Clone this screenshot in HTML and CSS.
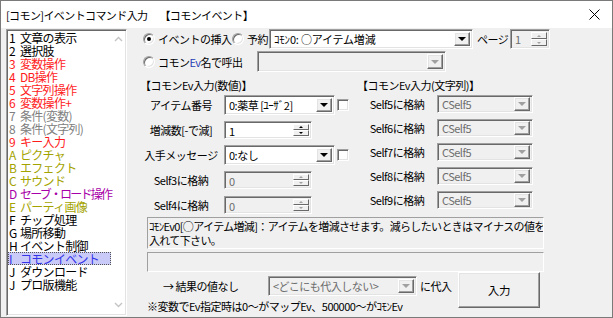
FILE: index.html
```html
<!DOCTYPE html>
<html lang="ja">
<head>
  <meta charset="UTF-8">
  <title>[コモン]イベントコマンド入力</title>
  <link rel="stylesheet" href="styles.css">
</head>
<body>
  <div class="window">
    <div class="titlebar">
      <span class="title-main">[コモン]イベントコマンド入力</span>
      <span class="title-sub">【コモンイベント】</span>
      <svg class="close" width="11" height="11" viewBox="0 0 11 11">
        <path d="M0.5 0.5 L10.5 10.5 M10.5 0.5 L0.5 10.5" stroke="#000" stroke-width="1" fill="none"/>
      </svg>
    </div>

    <div class="main">
      <div class="cmdlist">
        <ul class="items">
          <li class="black"><span class="key">1</span>文章の表示</li>
          <li class="black"><span class="key">2</span>選択肢</li>
          <li class="red"><span class="key">3</span>変数操作</li>
          <li class="red"><span class="key">4</span>DB操作</li>
          <li class="red"><span class="key">5</span>文字列操作</li>
          <li class="red"><span class="key">6</span>変数操作+</li>
          <li class="gray"><span class="key">7</span>条件(変数)</li>
          <li class="gray"><span class="key">8</span>条件(文字列)</li>
          <li class="red"><span class="key">9</span>キー入力</li>
          <li class="olive"><span class="key">A</span>ピクチャ</li>
          <li class="olive"><span class="key">B</span>エフェクト</li>
          <li class="olive"><span class="key">C</span>サウンド</li>
          <li class="purple tight"><span class="key">D</span>セーブ・ロード操作</li>
          <li class="olive"><span class="key">E</span>パーティ画像</li>
          <li class="black"><span class="key">F</span>チップ処理</li>
          <li class="black"><span class="key">G</span>場所移動</li>
          <li class="black"><span class="key">H</span>イベント制御</li>
          <li class="selected"><span class="key">I</span>コモンイベント</li>
          <li class="black"><span class="key">J</span>ダウンロード</li>
          <li class="black"><span class="key">J</span>プロ版機能</li>
        </ul>
        <div class="vscroll">
          <svg width="9" height="6" viewBox="0 0 9 6"><path d="M1 5 L4.5 1.5 L8 5" stroke="#c4c4c4" stroke-width="1.4" fill="none"/></svg>
          <svg width="9" height="6" viewBox="0 0 9 6"><path d="M1 1 L4.5 4.5 L8 1" stroke="#c4c4c4" stroke-width="1.4" fill="none"/></svg>
        </div>
      </div>

      <div class="panel">
        <div class="row row-mode">
          <span class="radio checked"></span>
          <span class="opt opt-insert">イベントの挿入</span>
          <span class="radio"></span>
          <span class="opt opt-reserve">予約</span>
          <div class="combo w-reserve">
            <span class="val">ｺﾓﾝ0: ○アイテム増減</span>
            <span class="drop"></span>
          </div>
          <span class="opt opt-page">ページ</span>
          <div class="spin disabled w-page">
            <span class="val">1</span>
            <span class="arrows"><span class="up"></span><span class="down"></span></span>
          </div>
        </div>

        <div class="row row-name">
          <span class="radio"></span>
          <span class="opt opt-name">コモン<span class="ev">Ev</span>名で呼出</span>
          <div class="combo disabled w-name">
            <span class="val"></span>
            <span class="drop"></span>
          </div>
        </div>

        <div class="args">
          <div class="col col-num">
            <div class="head">【コモンEv入力(数値)】</div>
            <div class="arg">
              <span class="lbl">アイテム番号</span>
              <div class="combo w-arg">
                <span class="val">0:薬草 [ﾕｰｻﾞ2]</span>
                <span class="drop"></span>
              </div>
              <span class="check"></span>
            </div>
            <div class="arg">
              <span class="lbl">増減数[-で減]</span>
              <div class="spin w-spin">
                <span class="val">1</span>
                <span class="arrows"><span class="up"></span><span class="down"></span></span>
              </div>
            </div>
            <div class="arg">
              <span class="lbl">入手メッセージ</span>
              <div class="combo w-arg">
                <span class="val">0:なし</span>
                <span class="drop"></span>
              </div>
              <span class="check"></span>
            </div>
            <div class="arg">
              <span class="lbl">Self3に格納</span>
              <div class="spin disabled w-spin">
                <span class="val">0</span>
                <span class="arrows"><span class="up"></span><span class="down"></span></span>
              </div>
            </div>
            <div class="arg">
              <span class="lbl">Self4に格納</span>
              <div class="spin disabled w-spin">
                <span class="val">0</span>
                <span class="arrows"><span class="up"></span><span class="down"></span></span>
              </div>
            </div>
          </div>

          <div class="col col-str">
            <div class="head">【コモンEv入力(文字列)】</div>
            <div class="arg">
              <span class="lbl">Self5に格納</span>
              <div class="combo disabled w-str"><span class="val">CSelf5</span><span class="drop"></span></div>
            </div>
            <div class="arg">
              <span class="lbl">Self6に格納</span>
              <div class="combo disabled w-str"><span class="val">CSelf5</span><span class="drop"></span></div>
            </div>
            <div class="arg">
              <span class="lbl">Self7に格納</span>
              <div class="combo disabled w-str"><span class="val">CSelf5</span><span class="drop"></span></div>
            </div>
            <div class="arg">
              <span class="lbl">Self8に格納</span>
              <div class="combo disabled w-str"><span class="val">CSelf5</span><span class="drop"></span></div>
            </div>
            <div class="arg">
              <span class="lbl">Self9に格納</span>
              <div class="combo disabled w-str"><span class="val">CSelf5</span><span class="drop"></span></div>
            </div>
          </div>
        </div>

        <div class="desc">ｺﾓﾝEv0[○アイテム増減]：アイテムを増減させます。減らしたいときはマイナスの値を<br>入れて下さい。</div>
        <div class="desc empty"></div>

        <div class="footer">
          <div class="footer-left">
            <div class="result">
              <span class="result-lbl">→ 結果の値なし</span>
              <div class="combo disabled w-result"><span class="val">&lt;どこにも代入しない&gt;</span><span class="drop"></span></div>
              <span class="assign">に代入</span>
            </div>
            <div class="note">※変数でEv指定時は0～がマップEv、500000～がｺﾓﾝEv</div>
          </div>
          <button class="btn">入力</button>
        </div>
      </div>
    </div>
  </div>
</body>
</html>
```

FILE: styles.css
```css
* {
  box-sizing: border-box;
}
body {
  margin: 0;
  font-family: "Noto Sans CJK JP", "Noto Sans", sans-serif;
  font-size: 11px;
  letter-spacing: -0.5px;
  color: #000;
  background: #fff;
}
.window {
  width: 613px;
  height: 318px;
  border: 1px solid #7a7a7a;
  background: #f0f0f0;
  display: flex;
  flex-direction: column;
}

/* title bar */
.titlebar {
  height: 27px;
  flex: none;
  background: #fff;
  display: flex;
  align-items: center;
  padding-left: 5px;
  white-space: nowrap;
  font-size: 11px;
  letter-spacing: -0.6px;
}
.title-sub {
  margin-left: 12px;
}
.close {
  margin-left: auto;
  margin-right: 12px;
}

.main {
  flex: 1;
  display: flex;
  padding: 1px 0 0 5px;
  min-height: 0;
}

/* 3d edges */
.cmdlist, .combo, .spin, .check, .radio {
  border: 1px solid;
  border-color: #a0a0a0 #fff #fff #a0a0a0;
  box-shadow: inset 1px 1px #696969, inset -1px -1px #e3e3e3;
}

/* command list */
.cmdlist {
  width: 121px;
  height: 287px;
  background: #fff;
  display: flex;
  padding: 1px;
}
.items {
  list-style: none;
  margin: 0;
  padding: 0;
  flex: 1;
  font-size: 12px;
  line-height: 13px;
  letter-spacing: -0.7px;
}
.items li {
  height: 13px;
  padding-left: 1px;
  white-space: nowrap;
}
.items .tight {
  letter-spacing: -1.8px;
}
.key {
  display: inline-block;
  width: 11px;
  letter-spacing: 0;
}
.black { color: #000; }
.red { color: #ff1c1c; }
.gray { color: #808080; }
.olive { color: #a3a300; }
.purple { color: #a800a8; }
.items .selected {
  background: #cacaf8;
  color: #3434e8;
  outline: 1px dotted #555;
  outline-offset: -1px;
}
.vscroll {
  width: 17px;
  display: flex;
  flex-direction: column;
  justify-content: space-between;
  align-items: center;
  padding: 5px 0 6px;
}

/* right panel */
.panel {
  flex: 1;
  display: flex;
  flex-direction: column;
  padding-left: 13px;
}
.row {
  display: flex;
  align-items: center;
  padding-left: 3px;
  white-space: nowrap;
}
.row-mode {
  height: 20px;
}
.row-name {
  height: 21px;
  margin-top: 2px;
}
.radio {
  width: 12px;
  height: 12px;
  border-radius: 50%;
  background: #fff;
  flex: none;
  display: flex;
  align-items: center;
  justify-content: center;
}
.radio.checked::after {
  content: "";
  width: 4px;
  height: 4px;
  border-radius: 50%;
  background: #000;
}
.opt {
  margin-left: 3px;
  flex: none;
}
.opt-insert { width: 74px; }
.opt-reserve { width: 22px; }
.opt-page { width: 30px; margin-left: 4px; }
.opt-name { width: 99px; }
.ev { color: #1f3cb4; }

/* combo box */
.combo {
  height: 20px;
  background: #fff;
  display: flex;
  align-items: stretch;
  padding: 2px;
  flex: none;
}
.combo .val {
  flex: 1;
  padding-left: 2px;
  line-height: 15px;
  overflow: hidden;
  white-space: nowrap;
}
.w-reserve .val {
  letter-spacing: -0.2px;
}
.drop {
  width: 16px;
  flex: none;
  background: #f0f0f0;
  border: 1px solid;
  border-color: #fff #696969 #696969 #fff;
  box-shadow: inset -1px -1px #a0a0a0, inset 1px 1px #e3e3e3;
  display: flex;
  align-items: center;
  justify-content: center;
}
.drop::after {
  content: "";
  border-left: 4px solid transparent;
  border-right: 4px solid transparent;
  border-top: 4px solid #000;
}
.combo.disabled {
  background: #f0f0f0;
}
.disabled .val {
  color: #6d6d6d;
}
.disabled .drop::after {
  border-top-color: #a0a0a0;
}

/* spinner */
.spin {
  height: 18px;
  background: #fff;
  display: flex;
  padding: 2px;
  flex: none;
}
.spin .val {
  flex: 1;
  padding-left: 2px;
  line-height: 14px;
}
.spin.disabled {
  background: #f0f0f0;
}
.arrows {
  width: 16px;
  display: flex;
  flex-direction: column;
}
.arrows span {
  flex: 1;
  background: #f0f0f0;
  border: 1px solid;
  border-color: #fff #696969 #696969 #fff;
  display: flex;
  align-items: center;
  justify-content: center;
}
.arrows .up::after {
  content: "";
  border-left: 2px solid transparent;
  border-right: 2px solid transparent;
  border-bottom: 2px solid #000;
}
.arrows .down::after {
  content: "";
  border-left: 2px solid transparent;
  border-right: 2px solid transparent;
  border-top: 2px solid #000;
}
.disabled .arrows .up::after { border-bottom-color: #a0a0a0; }
.disabled .arrows .down::after { border-top-color: #a0a0a0; }

.w-reserve { width: 204px; }
.w-page { width: 40px; margin-left: 3px; height: 20px; }
.w-name { width: 189px; height: 21px; }
.w-arg { width: 111px; }
.w-spin { width: 88px; }
.w-str { width: 96px; height: 18px; padding: 1px 2px; }
.w-result { width: 149px; }

.check {
  width: 12px;
  height: 12px;
  background: #fff;
  margin-left: 2px;
  flex: none;
}

/* argument columns */
.args {
  display: flex;
  margin-top: 6px;
}
.col-num {
  width: 217px;
}
.col-str {
  flex: 1;
}
.head {
  height: 14px;
  line-height: 14px;
  white-space: nowrap;
}
.arg {
  display: flex;
  align-items: center;
  white-space: nowrap;
}
.col-num .arg {
  height: 25px;
}
.col-str .arg {
  height: 24px;
}
.lbl {
  flex: none;
  text-align: center;
}
.col-num .lbl {
  width: 82px;
  margin-right: 2px;
}
.col-str .lbl {
  width: 80px;
}

/* description */
.desc {
  margin-left: 7px;
  width: 397px;
  height: 32px;
  border: 1px solid;
  border-color: #a0a0a0 #fff #fff #a0a0a0;
  padding: 1px 0 0 1px;
  line-height: 14px;
  letter-spacing: -0.65px;
  white-space: nowrap;
  overflow: hidden;
}
.desc.empty {
  height: 20px;
  margin-top: 3px;
}

/* footer */
.footer {
  display: flex;
  white-space: nowrap;
}
.footer-left {
  width: 318px;
}
.result {
  display: flex;
  align-items: center;
  height: 24px;
  margin-top: 2px;
}
.result-lbl {
  width: 128px;
  padding-left: 23px;
}
.assign {
  margin-left: 3px;
}
.note {
  margin-left: 7px;
  height: 14px;
  line-height: 14px;
  margin-top: 1px;
}
.btn {
  width: 82px;
  height: 36px;
  font-family: inherit;
  font-size: 11.5px;
  letter-spacing: -0.3px;
  background: #f0f0f0;
  border: 1px solid;
  border-color: #fff #696969 #696969 #fff;
  box-shadow: inset -1px -1px #a0a0a0, inset 1px 1px #e3e3e3;
  padding: 0;
  color: #000;
}
```
